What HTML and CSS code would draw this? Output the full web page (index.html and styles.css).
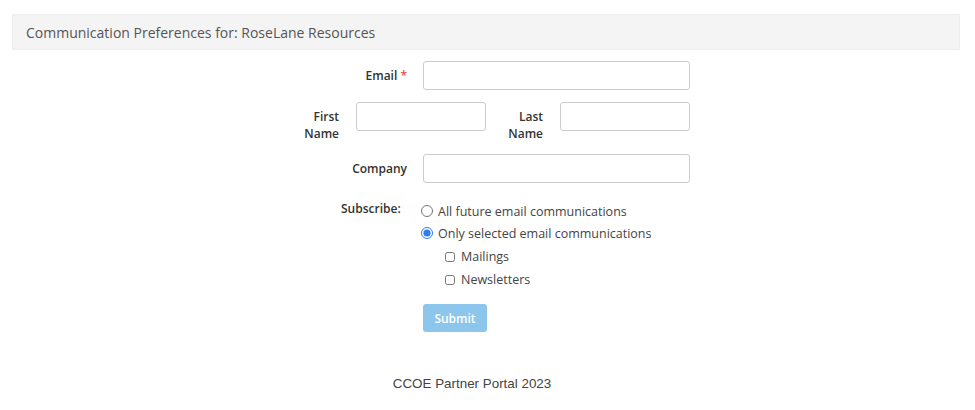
FILE: index.html
```html
<!DOCTYPE html>
<html lang="en">
<head>
    <meta charset="UTF-8">
    <meta name="viewport" content="width=device-width, initial-scale=1.0">
    <title>Communication Preferences</title>
    <link rel="stylesheet" href="styles.css">
</head>
<body>

    <div class="page-header">Communication Preferences for: RoseLane Resources</div>

    <form class="pref-form" onsubmit="return false;">
        <div class="row row-email">
            <label class="field-label" for="email">Email <span class="required">*</span></label>
            <input type="email" id="email" class="text-input">
        </div>

        <div class="row row-names">
            <label class="field-label first-label" for="firstName">First Name</label>
            <input type="text" id="firstName" class="text-input half">
            <label class="field-label last-label" for="lastName">Last Name</label>
            <input type="text" id="lastName" class="text-input half">
        </div>

        <div class="row">
            <label class="field-label" for="company">Company</label>
            <input type="text" id="company" class="text-input">
        </div>

        <div class="row row-subscribe">
            <span class="field-label">Subscribe:</span>
            <div class="options">
                <label class="option"><input type="radio" name="subscribe" value="all"> All future email communications</label>
                <label class="option"><input type="radio" name="subscribe" value="selected" checked> Only selected email communications</label>
                <div class="sub-options">
                    <label class="option"><input type="checkbox" name="mailings"> Mailings</label>
                    <label class="option"><input type="checkbox" name="newsletters"> Newsletters</label>
                </div>
                <button type="submit" class="submit-button" disabled>Submit</button>
            </div>
        </div>
    </form>

    <div class="footer">CCOE Partner Portal 2023</div>

</body>
</html>
```

FILE: styles.css
```css
body {
    font-family: "Open Sans", Arial, sans-serif;
    color: #333;
    margin: 0;
    background-color: #ffffff;
}
.page-header {
    margin: 14px 15px 0 12px;
    height: 36px;
    line-height: 36px;
    padding-left: 13px;
    background-color: #f4f4f4;
    border: 1px solid #eeeeee;
    box-sizing: border-box;
    font-size: 14px;
    color: #555;
}
.pref-form {
    width: 398px;
    margin: 11px auto 0;
    padding-left: 7px;
}
.row {
    display: flex;
    align-items: center;
    margin-bottom: 13px;
}
.row-email {
    margin-bottom: 12px;
}
.field-label {
    width: 115px;
    flex-shrink: 0;
    margin-right: 16px;
    text-align: right;
    font-size: 12px;
    font-weight: 600;
    color: #333;
    line-height: 17px;
}
.required {
    color: #e74c3c;
}
.text-input {
    width: 267px;
    height: 29px;
    box-sizing: border-box;
    border: 1px solid #cccccc;
    border-radius: 3px;
    padding: 4px 8px;
    font-family: inherit;
}
.row-names {
    align-items: flex-start;
    margin-bottom: 12px;
}
.row-names .field-label {
    padding-top: 6px;
}
.first-label {
    width: 47px;
    margin-right: 17px;
}
.last-label {
    width: 40px;
    margin-left: 17px;
    margin-right: 17px;
}
.text-input.half {
    width: 130px;
}
.row-subscribe {
    align-items: flex-start;
    margin-top: 17px;
}
.row-subscribe .field-label {
    width: 113px;
    margin-right: 16px;
    text-align: left;
    padding-left: 49px;
    box-sizing: border-box;
    line-height: 17px;
}
.options {
    display: flex;
    flex-direction: column;
}
.option {
    display: flex;
    align-items: center;
    height: 22px;
    font-size: 12.5px;
    color: #444;
}
.option input[type="radio"] {
    width: 12px;
    height: 12px;
    margin: 0 5px 0 0;
    accent-color: #2f7bf5;
}
.sub-options {
    padding-left: 24px;
    margin-top: 1px;
}
.sub-options .option {
    height: 23px;
}
.option input[type="checkbox"] {
    width: 10px;
    height: 10px;
    margin: 0 6px 0 0;
}
.submit-button {
    width: 64px;
    height: 28px;
    margin-top: 13px;
    margin-left: 2px;
    background-color: #8cc6ec;
    color: #ffffff;
    border: none;
    border-radius: 3px;
    font-family: inherit;
    font-size: 12px;
    font-weight: 600;
    cursor: pointer;
}
.footer {
    margin-top: 44px;
    text-align: center;
    padding-right: 31px;
    font-family: "Liberation Sans", Arial, sans-serif;
    font-size: 13.4px;
    color: #444;
}
```
